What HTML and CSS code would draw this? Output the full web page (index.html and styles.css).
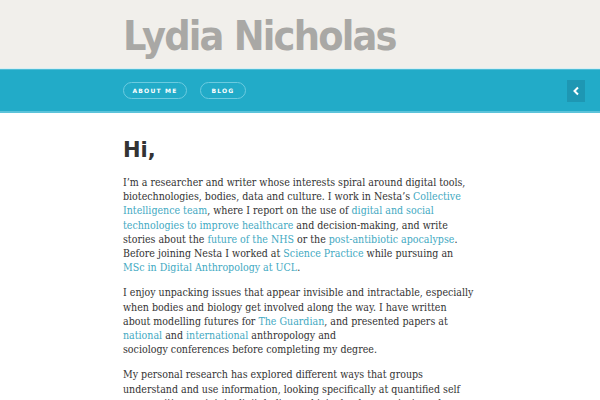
FILE: index.html
```html
<!DOCTYPE html>
<html>
<head>
<meta charset="utf-8">
<link rel="stylesheet" href="styles.css">
</head>
<body>
<header class="masthead">
  <div class="wrap"><h1 class="site-title">Lydia Nicholas</h1></div>
</header>
<nav class="navbar">
  <div class="wrap nav-inner">
    <a class="pill" href="#">About me</a>
    <a class="pill" href="#">Blog</a>
  </div>
  <a class="toggle" href="#"><svg width="8" height="10" viewBox="0 0 8 10"><path d="M6 1.5 L2.5 5 L6 8.5" fill="none" stroke="#fff" stroke-width="2"/></svg></a>
</nav>
<main class="wrap content">
  <h2 class="greeting">Hi,</h2>
  <p>I’m a researcher and writer whose interests spiral around digital tools, biotechnologies, bodies, data and culture. I work in Nesta’s <a href="#">Collective Intelligence team</a>, where I report on the use of <a href="#">digital and social technologies to improve healthcare</a> and decision-making, and write stories about the <a href="#">future of the NHS</a> or the <a href="#">post-antibiotic apocalypse</a>. Before joining Nesta I worked at <a href="#">Science Practice</a> while pursuing an <a href="#">MSc in Digital Anthropology at UCL</a>.</p>
  <p>I enjoy unpacking issues that appear invisible and intractable, especially when bodies and biology get involved along the way. I have written about modelling futures for <a href="#">The Guardian</a>, and presented papers at <a href="#">national</a> and <a href="#">international</a> anthropology and<br>sociology conferences before completing my degree.</p>
  <p>My personal research has explored different ways that groups understand and use information, looking specifically at quantified self communities, maintain digital, discuss biotechnology projects and particularly their impact.</p>
</main>
</body>
</html>
```

FILE: styles.css
```css
html, body { margin: 0; padding: 0; }
body { background: #fff; font-family: "DejaVu Serif Condensed", "DejaVu Serif", serif; color: #333; }
.wrap { width: 354px; margin: 0 auto; }
.masthead { background: #f1efeb; height: 69px; border-bottom: 1px solid #d8eef3; box-sizing: border-box; }
.site-title {
  margin: 0; padding-top: 12px;
  font-family: "DejaVu Sans Condensed", "DejaVu Sans", sans-serif; font-weight: bold;
  font-size: 41px; line-height: 48px; color: #a9a8a5; letter-spacing: -1.8px;
}
.navbar {
  position: relative; background: #22abc8; height: 44px; box-sizing: border-box;
  border-top: 1px solid #4fbdd6; border-bottom: 2px solid #5cc3da;
}
.nav-inner { display: flex; gap: 13px; padding-top: 12px; }
.pill {
  display: block; height: 17px; box-sizing: border-box; line-height: 15px;
  border: 1px solid #6ccbe0; border-radius: 9px;
  color: #fff; text-decoration: none; text-transform: uppercase; text-align: center;
  font-family: "DejaVu Sans", sans-serif; font-weight: bold; font-size: 6px; letter-spacing: 1.2px;
}
.pill:first-child { width: 64px; }
.pill:nth-child(2) { width: 46px; }
.toggle {
  position: absolute; right: 15px; top: 10px; width: 18px; height: 22px;
  background: #1e97b3; display: flex; align-items: center; justify-content: center;
}
.content { padding-top: 25px; }
.greeting {
  margin: 0 0 12px; font-family: "DejaVu Sans", sans-serif; font-weight: bold;
  font-size: 21px; line-height: 25px; color: #333;
}
.content p { margin: 0 0 11px; max-width: 352px; font-size: 10.55px; line-height: 14.2px; }
.content a { color: #3fa9c2; text-decoration: none; }
```
